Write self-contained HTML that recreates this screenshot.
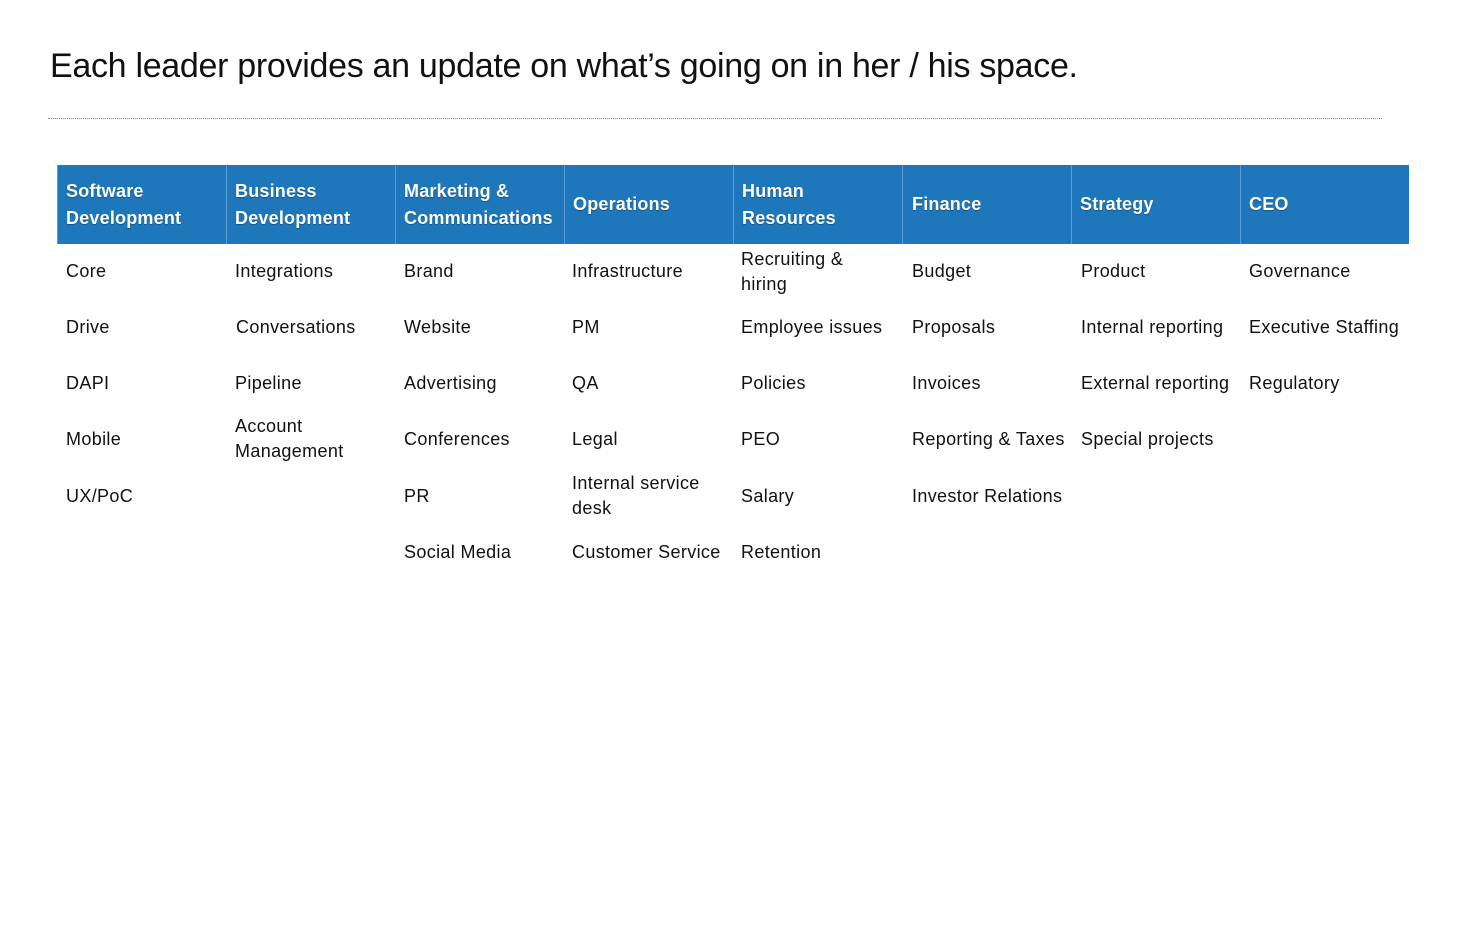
<!DOCTYPE html><html><head><meta charset="utf-8"><style>
body{margin:0;width:1463px;height:949px;background:#fff;font-family:"Liberation Sans",Arial,sans-serif;position:relative;overflow:hidden}
h1{position:absolute;left:50px;top:47px;margin:0;font-weight:normal;font-size:34px;letter-spacing:-0.3px;color:#111}
.dots{position:absolute;left:48px;top:118px;width:1334px;border-top:1.5px dotted #888}
.hdr{position:absolute;top:165px;height:79px;left:57px;width:1352px;background:#1f77bb}
.h{position:absolute;top:165px;height:79px;width:161px;padding-left:8px;display:flex;align-items:center;color:#fff;font-weight:bold;font-size:18px;line-height:27px;letter-spacing:0.2px;text-shadow:0 1px 1px rgba(0,0,0,.3);border-left:1px solid #5a9fd3;box-sizing:content-box}
.c{position:absolute;height:56px;width:168px;display:flex;align-items:center;font-size:18px;line-height:25px;color:#111;letter-spacing:0.35px}
</style></head><body>
<h1>Each leader provides an update on what’s going on in her / his space.</h1>
<div class="dots"></div>
<div class="hdr"></div>
<div class="h" style="left:57px">Software<br>Development</div>
<div class="h" style="left:226px">Business<br>Development</div>
<div class="h" style="left:395px">Marketing &amp;<br>Communications</div>
<div class="h" style="left:564px">Operations</div>
<div class="h" style="left:733px">Human<br>Resources</div>
<div class="h" style="left:902px;padding-left:9px">Finance</div>
<div class="h" style="left:1071px">Strategy</div>
<div class="h" style="left:1240px">CEO</div>

<div class="c" style="left:66px;top:243px">Core</div>
<div class="c" style="left:66px;top:299px">Drive</div>
<div class="c" style="left:66px;top:355px">DAPI</div>
<div class="c" style="left:66px;top:411px">Mobile</div>
<div class="c" style="left:66px;top:468px">UX/PoC</div>

<div class="c" style="left:235px;top:243px">Integrations</div>
<div class="c" style="left:236px;top:299px">Conversations</div>
<div class="c" style="left:235px;top:355px">Pipeline</div>
<div class="c" style="left:235px;top:411px">Account<br>Management</div>

<div class="c" style="left:404px;top:243px">Brand</div>
<div class="c" style="left:404px;top:299px">Website</div>
<div class="c" style="left:404px;top:355px">Advertising</div>
<div class="c" style="left:404px;top:411px">Conferences</div>
<div class="c" style="left:404px;top:468px">PR</div>
<div class="c" style="left:404px;top:524px">Social Media</div>

<div class="c" style="left:572px;top:243px">Infrastructure</div>
<div class="c" style="left:572px;top:299px">PM</div>
<div class="c" style="left:572px;top:355px">QA</div>
<div class="c" style="left:572px;top:411px">Legal</div>
<div class="c" style="left:572px;top:468px">Internal service<br>desk</div>
<div class="c" style="left:572px;top:524px">Customer Service</div>

<div class="c" style="left:741px;top:244px">Recruiting &amp;<br>hiring</div>
<div class="c" style="left:741px;top:299px">Employee issues</div>
<div class="c" style="left:741px;top:355px">Policies</div>
<div class="c" style="left:741px;top:411px">PEO</div>
<div class="c" style="left:741px;top:468px">Salary</div>
<div class="c" style="left:741px;top:524px">Retention</div>

<div class="c" style="left:912px;top:243px">Budget</div>
<div class="c" style="left:912px;top:299px">Proposals</div>
<div class="c" style="left:912px;top:355px">Invoices</div>
<div class="c" style="left:912px;top:411px">Reporting &amp; Taxes</div>
<div class="c" style="left:912px;top:468px">Investor Relations</div>

<div class="c" style="left:1081px;top:243px">Product</div>
<div class="c" style="left:1081px;top:299px">Internal reporting</div>
<div class="c" style="left:1081px;top:355px">External reporting</div>
<div class="c" style="left:1081px;top:411px">Special projects</div>

<div class="c" style="left:1249px;top:243px">Governance</div>
<div class="c" style="left:1249px;top:299px">Executive Staffing</div>
<div class="c" style="left:1249px;top:355px">Regulatory</div>
</body></html>
